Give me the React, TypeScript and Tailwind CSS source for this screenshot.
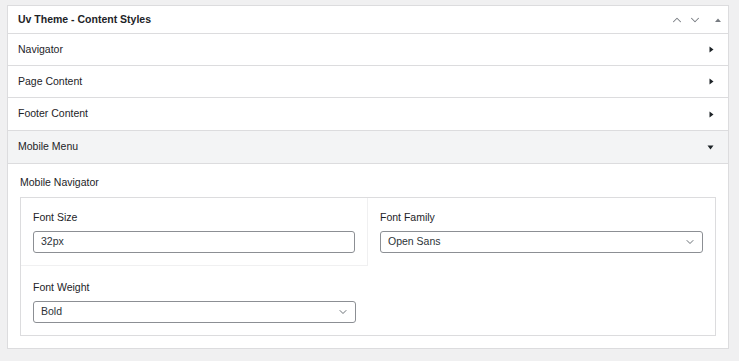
import { ChevronDown, ChevronUp } from 'lucide-react';

const font = { fontFamily: '"Liberation Sans", Arial, sans-serif' };

const RightTri = () => (
  <svg width="5" height="7" viewBox="0 0 5 7" className="text-[#1d2327]">
    <path d="M0.5 0.5 L4.5 3.5 L0.5 6.5 Z" fill="currentColor" />
  </svg>
);

const DownTri = () => (
  <svg width="7" height="5" viewBox="0 0 7 5" className="text-[#1d2327]">
    <path d="M0.5 0.5 L6.5 0.5 L3.5 4.5 Z" fill="currentColor" />
  </svg>
);

const Row = ({ label, open, tall }: { label: string; open?: boolean; tall?: boolean }) => (
  <div
    className={`flex items-center justify-between pl-[10px] pr-[14px] border-b border-[#dcdcde] text-[10.5px] text-[#1d2327] ${
      tall ? 'h-[33px]' : 'h-8'
    } ${open ? 'bg-[#f3f4f5]' : 'bg-white'}`}
  >
    <span>{label}</span>
    {open ? <DownTri /> : <RightTri />}
  </div>
);

const SelectBox = ({ value }: { value: string }) => (
  <div className="h-[22px] border border-[#8c8f94] rounded-[3px] bg-white flex items-center justify-between pl-[7px] pr-[6px] text-[10.5px] text-[#2c3338]">
    <span>{value}</span>
    <ChevronDown size={12} strokeWidth={1.7} className="text-[#50575e]" />
  </div>
);

export default function App() {
  return (
    <div className="w-[739px] h-[361px] bg-[#f0f0f1] pt-[5px] pl-[7px] pr-[10px]" style={font}>
      <div className="bg-white border border-[#dcdcde]">
        {/* header */}
        <div className="h-[28px] flex items-center justify-between pl-[10px] pr-[4px] border-b border-[#dcdcde]">
          <span className="text-[10.5px] font-bold text-[#1d2327]">Uv Theme - Content Styles</span>
          <div className="flex items-center gap-[4px] text-[#787c82]">
            <ChevronUp size={14} strokeWidth={1.8} />
            <ChevronDown size={14} strokeWidth={1.8} />
            <svg width="12" height="10" viewBox="0 0 12 10" className="ml-[6px]">
              <path d="M3 7 L9 7 L6 3.5 Z" fill="currentColor" />
            </svg>
          </div>
        </div>

        <Row label="Navigator" />
        <Row label="Page Content" />
        <Row label="Footer Content" tall />
        <Row label="Mobile Menu" open tall />

        {/* open section */}
        <div className="px-[12px] pt-[12px] pb-[12px]">
          <div className="text-[10.5px] leading-[13px] text-[#1d2327] mb-[8px]">Mobile Navigator</div>
          <div className="border border-[#dcdcde] grid grid-cols-2">
            <div className="px-[12px] pt-[13px] pb-[12px] border-r border-b border-[#f0f0f1]">
              <div className="text-[10.5px] text-[#1d2327] mb-[7px] leading-[13px]">Font Size</div>
              <div className="h-[22px] border border-[#8c8f94] rounded-[3px] bg-white flex items-center pl-[7px] text-[10.5px] text-[#2c3338]">
                32px
              </div>
            </div>
            <div className="px-[12px] pt-[13px] pb-[12px]">
              <div className="text-[10.5px] text-[#1d2327] mb-[7px] leading-[13px]">Font Family</div>
              <SelectBox value="Open Sans" />
            </div>
            <div className="px-[12px] pt-[15px] pb-[12px]">
              <div className="text-[10.5px] text-[#1d2327] mb-[7px] leading-[13px]">Font Weight</div>
              <SelectBox value="Bold" />
            </div>
            <div />
          </div>
        </div>
      </div>
    </div>
  );
}
